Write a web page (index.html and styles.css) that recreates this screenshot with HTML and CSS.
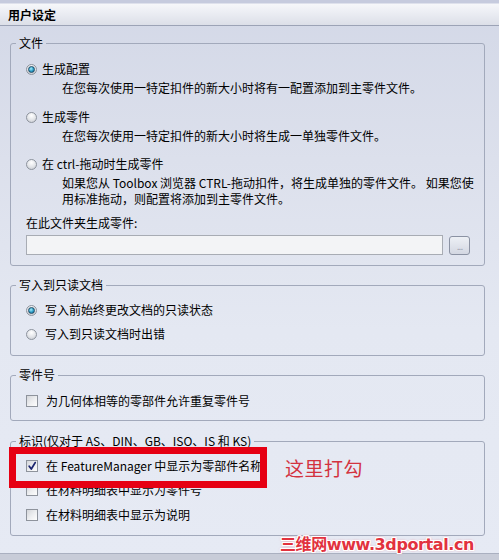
FILE: index.html
```html
<!DOCTYPE html>
<html lang="zh-CN">
<head>
<meta charset="utf-8">
<title>用户设定</title>
<link rel="stylesheet" href="styles.css">
</head>
<body>
<div class="app">
  <div class="titlebar"><span class="title">用户设定</span></div>
  <div class="panel">
    <fieldset class="group">
      <legend>文件</legend>
      <div class="body body-file">
        <div class="option">
          <div class="row"><span class="radio on"></span><span class="label">生成配置</span></div>
          <div class="desc">在您每次使用一特定扣件的新大小时将有一配置添加到主零件文件。</div>
        </div>
        <div class="option">
          <div class="row"><span class="radio"></span><span class="label">生成零件</span></div>
          <div class="desc">在您每次使用一特定扣件的新大小时将生成一单独零件文件。</div>
        </div>
        <div class="option">
          <div class="row"><span class="radio"></span><span class="label">在 ctrl-拖动时生成零件</span></div>
          <div class="desc">如果您从 Toolbox 浏览器 CTRL-拖动扣件，将生成单独的零件文件。 如果您使<br>用标准拖动，则配置将添加到主零件文件。</div>
        </div>
        <div class="field-label">在此文件夹生成零件:</div>
        <div class="path-row">
          <div class="input"></div>
          <div class="browse">...</div>
        </div>
      </div>
    </fieldset>

    <fieldset class="group g-readonly">
      <legend>写入到只读文档</legend>
      <div class="body body-readonly">
        <div class="row"><span class="radio on"></span><span class="label wide">写入前始终更改文档的只读状态</span></div>
        <div class="row"><span class="radio"></span><span class="label wide">写入到只读文档时出错</span></div>
      </div>
    </fieldset>

    <fieldset class="group g-partno">
      <legend>零件号</legend>
      <div class="body body-partno">
        <div class="row"><span class="check"></span><span class="label wide">为几何体相等的零部件允许重复零件号</span></div>
      </div>
    </fieldset>

    <fieldset class="group g-ident">
      <legend>标识(仅对于 AS、DIN、GB、ISO、IS 和 KS)</legend>
      <div class="body body-ident">
        <div class="row"><span class="check on"><svg viewBox="0 0 10 10" width="10" height="10"><path d="M2.2 5.2 L4.3 8 L8.2 1.6" fill="none" stroke="#1d2670" stroke-width="1.8" stroke-linecap="round" stroke-linejoin="round"/></svg></span><span class="label wide">在 FeatureManager 中显示为零部件名称</span></div>
        <div class="row"><span class="check"></span><span class="label wide">在材料明细表中显示为零件号</span></div>
        <div class="row"><span class="check"></span><span class="label wide">在材料明细表中显示为说明</span></div>
      </div>
    </fieldset>
  </div>
  <div class="footer"></div>

  <div class="mark-box"></div>
  <div class="note">这里打勾</div>
  <div class="watermark">三维网www.3dportal.cn</div>
</div>
</body>
</html>
```

FILE: styles.css
```css
html, body {
  margin: 0;
  padding: 0;
}

body {
  background: #e3e7f1;
  font-family: "Noto Sans CJK SC", "Noto Sans", sans-serif;
  font-size: 12px;
  color: #000;
}

.app {
  position: relative;
  width: 499px;
  height: 560px;
  overflow: hidden;
  display: flex;
  flex-direction: column;
  background: linear-gradient(180deg, #d3d8e7 0px, #dce0ec 160px, #e4e8f2 330px, #e6eaf4 560px);
}

.titlebar {
  height: 25px;
  flex: 0 0 25px;
  border-bottom: 1px solid #9ca3b6;
  background: linear-gradient(180deg, #c6cbde 0px, #c6cbde 3px, #f6f7fa 4px, #eceef4 12px, #dcdfe8 25px);
  display: flex;
  align-items: center;
  padding-left: 8px;
}

.title {
  font-weight: bold;
  font-size: 12px;
  line-height: 16px;
  margin-top: 4px;
  color: #000;
}

.panel {
  flex: 1 1 auto;
  padding-top: 9px;
}

.group {
  box-sizing: border-box;
  width: 475px;
  margin: 0 0 0 10px;
  padding: 0;
  min-width: 0;
  border: 1px solid #a2a9bb;
  border-radius: 3px;
}

.group legend {
  margin-left: 5px;
  padding: 0 3px;
  line-height: 16px;
  font-size: 12px;
  color: #000;
}

.g-readonly { margin-top: 11px; }
.g-partno { margin-top: 11px; }
.g-ident { margin-top: 12px; }

.body {
  padding-left: 15px;
  display: flex;
  flex-direction: column;
}

.body-file { padding-top: 10px; padding-bottom: 10px; }
.body-readonly { padding-top: 9px; padding-bottom: 13px; gap: 8px; }
.body-partno { padding-top: 10px; padding-bottom: 11px; }
.body-ident { padding-top: 9px; padding-bottom: 12px; gap: 8px; }
.body-ident .row:last-child { margin-top: 1px; }

.option + .option { margin-top: 13px; }
.option:nth-child(3) { margin-top: 12px; }

.row {
  display: flex;
  align-items: center;
  height: 16px;
  line-height: 16px;
  white-space: nowrap;
}

.label { margin-left: 5px; }
.label.wide { margin-left: 8px; }

.desc {
  margin-top: 3px;
  margin-left: 36px;
  line-height: 16px;
  white-space: nowrap;
}

.field-label {
  margin-top: 8px;
  line-height: 16px;
}

.path-row {
  margin-top: 4px;
  display: flex;
  align-items: center;
  gap: 6px;
}

.input {
  box-sizing: border-box;
  width: 417px;
  height: 20px;
  background: #f3f4f6;
  border: 1px solid #a8acb4;
}

.browse {
  box-sizing: border-box;
  width: 21px;
  height: 19px;
  border: 1px solid #8b92a3;
  border-radius: 3px;
  background: linear-gradient(180deg, #edf0f5 0%, #d3d7e2 100%);
  color: #9aa0ae;
  font-size: 10px;
  line-height: 18px;
  text-align: center;
  letter-spacing: -1px;
}

.radio {
  box-sizing: border-box;
  width: 11px;
  height: 11px;
  flex: 0 0 11px;
  border-radius: 50%;
  border: 1px solid #8d939d;
  background: radial-gradient(circle at 50% 30%, #ffffff 0%, #e2e4e8 55%, #c2c5cc 100%);
  display: flex;
  align-items: center;
  justify-content: center;
}

.radio.on::after {
  content: "";
  box-sizing: border-box;
  width: 7px;
  height: 7px;
  border-radius: 50%;
  border: 1px solid #1f4a66;
  background: radial-gradient(circle at 40% 35%, #a5ecfb 0%, #2b9cc6 55%, #0f5d84 100%);
}

.check {
  box-sizing: border-box;
  width: 12px;
  height: 12px;
  flex: 0 0 12px;
  border: 1px solid #8e939c;
  background: linear-gradient(135deg, #d4d6da 0%, #eeeff1 55%, #fdfdfd 100%);
  display: flex;
  align-items: center;
  justify-content: center;
}

.check svg { display: block; }

.footer {
  flex: 0 0 6px;
  border-top: 1px solid #aab0c0;
  background: #c8ccd8;
}

/* annotations laid over the dialog */
.mark-box {
  position: absolute;
  left: 9px;
  top: 447px;
  width: 258px;
  height: 41px;
  box-sizing: border-box;
  border: 7px solid #e60013;
}

.note {
  position: absolute;
  left: 285px;
  top: 455px;
  font-size: 19px;
  line-height: 25px;
  color: #d3323f;
  letter-spacing: 0.5px;
}

.watermark {
  position: absolute;
  left: 280px;
  top: 535px;
  font-family: "DejaVu Sans", "Noto Sans CJK SC", sans-serif;
  font-weight: bold;
  font-size: 16px;
  line-height: 19px;
  color: #e2323e;
  letter-spacing: -0.4px;
  text-shadow:
    1px 0 0 #fff, -1px 0 0 #fff, 0 1px 0 #fff, 0 -1px 0 #fff,
    1px 1px 0 #fff, -1px -1px 0 #fff, 1px -1px 0 #fff, -1px 1px 0 #fff,
    0 0 3px #e8707a;
}
```
